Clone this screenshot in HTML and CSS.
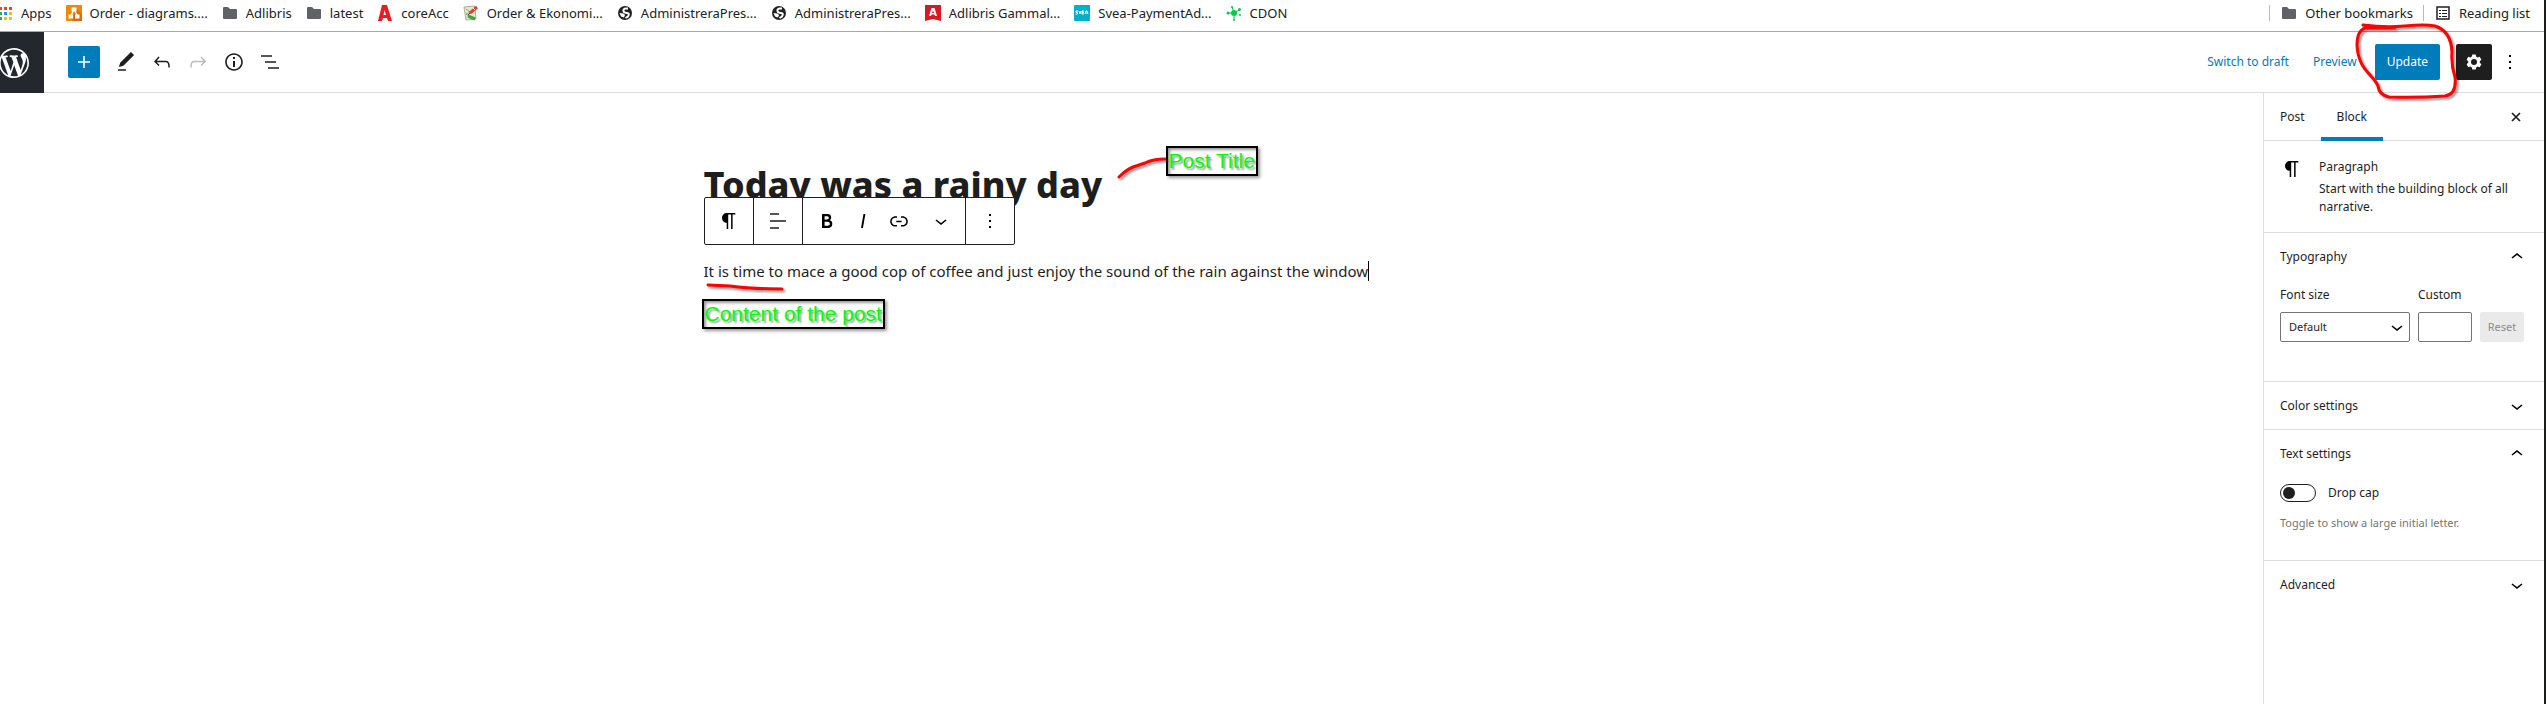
FILE: index.html
```html
<!DOCTYPE html>
<html lang="en">
<head>
<meta charset="utf-8">
<title>Edit Post</title>
<link rel="stylesheet" href="styles.css">
</head>
<body>
<div class="screen">
<nav class="bookmarks" aria-label="Bookmarks">
  <a class="bm bm-apps" href="#"><svg width="16" height="16" viewBox="0 0 16 16"><g fill="#ea4335"><path d="M2 2h3v3H2zM7 2h3v3H7zM12 2h3v3h-3z"/></g><path fill="#34a853" d="M2 7h3v3H2zM2 12h3v3H2z"/><path fill="#2196f3" d="M7 7h3v3H7z"/><path fill="#fbbc05" d="M12 7h3v3h-3zM7 12h3v3H7zM12 12h3v3h-3z"/></svg>Apps</a>
  <a class="bm" href="#"><svg width="16" height="16" viewBox="0 0 16 16"><rect width="16" height="16" rx="1" fill="#f08705"/><path d="M10 3l6 6v7H6z" fill="#df6c0c"/><path d="M8 4L5 11M8 4l3.500 7" stroke="#fff" stroke-width="1.300"/><path fill="#fff" d="M5.500 2.500h5v4h-5zM2.500 9.500h4.500v4H2.500zM9 9.500h4.500v4H9z"/></svg>Order - diagrams....</a>
  <a class="bm" href="#"><svg width="16" height="16" viewBox="0 0 16 16"><path fill="#5f6368" d="M1 3q0-1 1-1h4l2 2h6q1 0 1 1v8q0 1-1 1H2q-1 0-1-1z"/></svg>Adlibris</a>
  <a class="bm" href="#"><svg width="16" height="16" viewBox="0 0 16 16"><path fill="#5f6368" d="M1 3q0-1 1-1h4l2 2h6q1 0 1 1v8q0 1-1 1H2q-1 0-1-1z"/></svg>latest</a>
  <a class="bm" href="#"><svg width="16" height="16" viewBox="0 0 16 16"><path fill="#ed1c24" fill-rule="evenodd" d="M5 0h5l5 16h-4l-1-3H6l-1 3H1zM7.500 5L6.500 10h2.500z"/></svg>coreAcc</a>
  <a class="bm" href="#"><svg width="16" height="16" viewBox="0 0 16 16"><path fill="#e8e6d0" stroke="#a9b096" d="M1 2l11-1 1 13-10 1z"/><path d="M3 4l4 3-4 2 4 3" fill="none" stroke="#7fae74"/><path d="M7 8l7-6" stroke="#d8452a" stroke-width="3"/><path d="M5 10l2-2" stroke="#333"/><path d="M5 11l7 3" stroke="#3aa53e" stroke-width="3"/><path d="M10 3l2 2" stroke="#fff"/></svg>Order &amp; Ekonomi...</a>
  <a class="bm" href="#"><svg width="16" height="16" viewBox="0 0 16 16"><circle cx="8" cy="8" r="7" fill="#202124"/><path fill="none" stroke="#fff" stroke-width="2" d="M11 3.500H8.500Q6 4 6.500 6T10 8t1 3.500L8.500 13"/><path fill="#fff" d="M2.500 8l4 .5L8 10l-1 2.500-3-1z"/></svg>AdministreraPres...</a>
  <a class="bm" href="#"><svg width="16" height="16" viewBox="0 0 16 16"><circle cx="8" cy="8" r="7" fill="#202124"/><path fill="none" stroke="#fff" stroke-width="2" d="M11 3.500H8.500Q6 4 6.500 6T10 8t1 3.500L8.500 13"/><path fill="#fff" d="M2.500 8l4 .5L8 10l-1 2.500-3-1z"/></svg>AdministreraPres...</a>
  <a class="bm" href="#"><svg width="16" height="16" viewBox="0 0 16 16"><path fill="#d71920" d="M0 0h16v16l-8-2-8 2z"/><path fill="#fff" fill-rule="evenodd" d="M6.500 3h3L12 11h-2l-.5-1.500h-3L6 11H4zM8 5.500L7 8h2z"/></svg>Adlibris Gammal...</a>
  <a class="bm" href="#"><svg width="16" height="16" viewBox="0 0 16 16"><rect width="16" height="16" rx="1" fill="#00aece"/><path fill="none" stroke="#fff" d="M4 6H2v1.500h1.500V9H1.500M5 6l1 3 1-3M10 6H8v3h2M8 7.500h2M11 9l1-3h1l1 3M11.500 8h2"/></svg>Svea-PaymentAd...</a>
  <a class="bm" href="#"><svg width="16" height="16" viewBox="0 0 16 16"><path d="M8 8L6 2M8 8l5-3M8 8v7M8 8H2" stroke="#08c84e"/><g fill="#08c84e"><circle cx="8" cy="8" r="3"/><circle cx="6" cy="2" r="1"/><circle cx="13.500" cy="4.500" r="1.500"/><circle cx="2" cy="8" r="1.500"/><circle cx="8" cy="15" r="1"/><circle cx="14" cy="10" r="1"/></g></svg>CDON</a>
  <span class="bm-spacer"></span>
  <a class="bm bm-right" href="#"><svg width="16" height="16" viewBox="0 0 16 16"><path fill="#5f6368" d="M1 3q0-1 1-1h4l2 2h6q1 0 1 1v8q0 1-1 1H2q-1 0-1-1z"/></svg>Other bookmarks</a>
  <a class="bm bm-right" href="#"><svg width="16" height="16" viewBox="0 0 16 16"><path fill="none" stroke="#202124" stroke-width="1.500" d="M2 2h12v12H2z"/><path stroke="#202124" d="M4 5.500h2M4 8.500h2M4 11.500h2M7 5.500h5M7 8.500h5M7 11.500h5"/></svg>Reading list</a>
</nav>

<header class="topbar">
  <a class="wp-home" href="#" aria-label="View posts"><svg width="36" height="36" viewBox="-2 -2 24 24" fill="#fff"><path d="M20 10c0-5.510-4.490-10-10-10C4.480 0 0 4.490 0 10c0 5.520 4.480 10 10 10 5.510 0 10-4.480 10-10zM7.780 15.370L4.370 6.220c.55-.02 1.170-.08 1.170-.08.5-.06.440-1.130-.06-1.110 0 0-1.450.11-2.370.11-.18 0-.37 0-.58-.01C4.120 2.690 6.870 1.110 10 1.110c2.330 0 4.450.87 6.050 2.340-.68-.11-1.650.39-1.650 1.580 0 .74.450 1.360.9 2.100.35.610.550 1.360.550 2.460 0 1.490-1.400 5-1.400 5l-3.030-8.370c.54-.02.820-.17.820-.17.5-.05.440-1.250-.06-1.220 0 0-1.440.12-2.380.12-.87 0-2.330-.12-2.330-.12-.5-.03-.56 1.200-.06 1.220l.92.080 1.260 3.410zM17.410 10c.24-.64.740-1.870.430-4.250.7 1.290 1.050 2.710 1.050 4.250 0 3.290-1.730 6.240-4.400 7.780.97-2.590 1.940-5.200 2.920-7.780zM6.100 18.090C3.120 16.650 1.110 13.530 1.110 10c0-1.300.230-2.480.720-3.590C3.250 10.300 4.670 14.200 6.100 18.090zm4.030-6.630l2.580 6.980c-.86.290-1.760.45-2.710.45-.79 0-1.570-.11-2.290-.33.810-2.380 1.620-4.740 2.420-7.100z"/></svg></a>
  <div class="tools">
    <button class="tool tool-add" aria-label="Add block"><svg width="24" height="24" viewBox="0 0 24 24"><path fill="#fff" d="M18 11.200h-5.200V6h-1.600v5.200H6v1.600h5.200V18h1.600v-5.200H18z"/></svg></button>
    <button class="tool" aria-label="Modes"><svg width="24" height="24" viewBox="0 0 24 24"><path d="M20.100 5.100L16.900 2 6.200 12.700l-1.300 4.400 4.500-1.300L20.100 5.100z"/><path fill="#555" d="M4 19h8v2H4z"/></svg></button>
    <button class="tool" aria-label="Undo"><svg width="24" height="24" viewBox="0 0 24 24"><path d="M18.300 11.700c-.6-.6-1.400-.9-2.300-.9H6.700l2.900-3.300-1.100-1-4.500 5L8.500 16l1-1-2.700-2.700H16c.5 0 .9.200 1.300.5 1 1 1 3.400 1 4.500v.3h1.500v-.2c0-1.500 0-4.300-1.500-5.700z"/></svg></button>
    <button class="tool tool-off" aria-label="Redo" disabled><svg width="24" height="24" viewBox="0 0 24 24"><path d="M15.600 6.500l-1.100 1 2.900 3.300H8c-.9 0-1.700.3-2.300.9-1.400 1.500-1.400 4.200-1.400 5.600v.2h1.500v-.3c0-1.100 0-3.500 1-4.500.3-.3.700-.5 1.300-.5h9.200L14.500 15l1.100 1.100 4.600-4.600-4.600-5z"/></svg></button>
    <button class="tool" aria-label="Details"><svg width="24" height="24" viewBox="0 0 24 24"><path d="M12 3.200c-4.800 0-8.800 3.900-8.800 8.800 0 4.800 3.900 8.800 8.800 8.800 4.800 0 8.800-3.900 8.800-8.800 0-4.800-4-8.800-8.800-8.800zm0 16c-4 0-7.200-3.300-7.200-7.200C4.800 8 8 4.800 12 4.800s7.200 3.300 7.200 7.200c0 4-3.200 7.200-7.200 7.200zM11 17h2v-6h-2v6zm0-8h2V7h-2v2z"/></svg></button>
    <button class="tool tool-soft" aria-label="Outline"><svg width="24" height="24" viewBox="0 0 24 24"><path d="M3 5h11v2H3zM7 11h11v2H7zM10 17h11v2H10z"/></svg></button>
  </div>
  <div class="actions">
    <button class="link-btn">Switch to draft</button>
    <button class="link-btn">Preview</button>
    <div class="update-wrap">
      <button class="update">Update</button>
      <svg class="scribble" width="106" height="82" viewBox="0 0 106 82"><path d="M8 4Q30 7 50 5T80 5Q96 10 97 31Q96 44 100 56Q102 73 90 75Q62 77 34 76Q24 74 23 65C18 53 3 49 2 24Q2 10 10 7L40 7" /></svg>
    </div>
    <button class="gear" aria-label="Settings"><svg width="24" height="24" viewBox="0 0 24 24"><path fill="#fff" fill-rule="evenodd" d="M10.300 4.500h3.400l.5 2.100 1.400.8 2.100-.6 1.700 2.900-1.600 1.500v1.600l1.600 1.500-1.700 2.900-2.100-.6-1.400.8-.5 2.100h-3.400l-.5-2.100-1.400-.8-2.100.6-1.700-2.900 1.600-1.500v-1.600L4.600 9.700l1.700-2.900 2.100.6 1.400-.8zM12 9a3 3 0 1 0 0 6 3 3 0 0 0 0-6z"/></svg></button>
    <button class="more" aria-label="Options"><svg width="24" height="24" viewBox="0 0 24 24"><path d="M11 5h2v2h-2zM11 11h2v2h-2zM11 17h2v2h-2z"/></svg></button>
  </div>
</header>

<div class="workspace">
  <main class="canvas">
    <article class="post">
      <h1 class="title">Today was a rainy day</h1>
      <div class="block-tools" role="toolbar" aria-label="Block tools">
        <div class="group"><button class="bt" aria-label="Paragraph"><svg width="24" height="24" viewBox="0 0 24 24"><path d="M18.300 4H9.900v-.1l-.9.200c-2.300.4-4 2.400-4 4.800s1.700 4.400 4 4.800l.7.100V20h1.500V5.500h2.900V20h1.500V5.500h2.700V4z"/></svg></button></div>
        <div class="group"><button class="bt tool-soft" aria-label="Align"><svg width="24" height="24" viewBox="0 0 24 24"><path d="M4 4h9v2H4zM4 11h16v2H4zM4 18h9v2H4z"/></svg></button></div>
        <div class="group group-wide"><button class="bt" aria-label="Bold"><svg width="24" height="24" viewBox="0 0 24 24"><path d="M14.700 11.300c1-.6 1.500-1.600 1.500-3 0-2.300-1.300-3.400-4-3.400H7v14h5.800c1.400 0 2.500-.3 3.300-1 .8-.7 1.200-1.700 1.200-2.900.1-1.900-.8-3.100-2.600-3.700zm-5.100-4h2.300c.6 0 1.100.1 1.400.4.3.300.5.700.5 1.200s-.2 1-.5 1.200c-.3.300-.8.400-1.400.4H9.600V7.300zm4.600 9c-.4.300-1 .4-1.700.4H9.600v-3.900h2.900c.7 0 1.300.2 1.700.5.4.3.600.8.600 1.500s-.2 1.200-.6 1.500z"/></svg></button>
        <button class="bt" aria-label="Italic"><svg width="24" height="24" viewBox="0 0 24 24"><path d="M12.500 5L10 19h1.900l2.500-14z"/></svg></button>
        <button class="bt" aria-label="Link"><svg width="24" height="24" viewBox="0 0 24 24"><path d="M15.600 7.200H14v1.500h1.600c2 0 3.700 1.700 3.700 3.700s-1.700 3.700-3.700 3.700H14v1.500h1.600c2.800 0 5.200-2.300 5.200-5.200 0-2.900-2.300-5.200-5.200-5.200zM4.700 12.400c0-2 1.700-3.700 3.700-3.700H10V7.200H8.400c-2.900 0-5.200 2.300-5.200 5.200 0 2.900 2.300 5.200 5.200 5.200H10v-1.500H8.400c-2 0-3.700-1.700-3.700-3.700zm4.600.9h5.300v-1.500H9.300v1.500z"/></svg></button>
        <button class="bt bt-more" aria-label="More"><svg width="24" height="24" viewBox="0 0 24 24"><path d="M17.500 11.600L12 16l-5.500-4.400.9-1.200L12 14l4.500-3.600 1 1.200z"/></svg></button></div>
        <div class="group"><button class="bt" aria-label="Options"><svg width="24" height="24" viewBox="0 0 24 24"><path d="M11 5h2v2h-2zM11 11h2v2h-2zM11 17h2v2h-2z"/></svg></button></div>
      </div>
      <p class="para">It is time to mace a good cop of coffee and just enjoy the sound of the rain against the window<span class="caret"></span></p>
      <svg class="mark mark-para" width="90" height="18" viewBox="0 0 90 18"><path d="M4 5L26 6Q48 9 78 9"/></svg>
      <svg class="mark mark-title" width="56" height="34" viewBox="0 0 56 34"><path d="M4 26Q11 19 18 16L30 12Q38 8 50 8"/></svg>
      <span class="note note-title">Post Title</span>
      <span class="note note-para">Content of the post</span>
    </article>
  </main>

  <aside class="sidebar">
    <div class="tabs">
      <button class="tab">Post</button>
      <button class="tab tab-on">Block</button>
      <button class="close" aria-label="Close settings"><svg width="24" height="24" viewBox="0 0 24 24"><path d="M8 8l8 8M16 8l-8 8" stroke="#1e1e1e" stroke-width="1.700"/></svg></button>
    </div>
    <section class="card">
      <svg width="24" height="24" viewBox="0 0 24 24"><path d="M18.300 4H9.900v-.1l-.9.200c-2.300.4-4 2.400-4 4.800s1.700 4.400 4 4.800l.7.100V20h1.500V5.500h2.900V20h1.500V5.500h2.700V4z"/></svg>
      <div><h2 class="card-title">Paragraph</h2><p class="card-text">Start with the building block of all narrative.</p></div>
    </section>
    <section class="panel">
      <button class="panel-head">Typography<svg width="24" height="24" viewBox="0 0 24 24"><path d="M6.500 12.400L12 8l5.500 4.400-.9 1.200L12 10l-4.500 3.600-1-1.200z"/></svg></button>
      <div class="panel-body fonts">
        <div class="field field-size"><label for="size">Font size</label><div class="select-wrap"><select id="size" class="control"><option>Default</option></select><svg width="18" height="18" viewBox="3 3 18 18"><path d="M17.500 11.600L12 16l-5.500-4.400.9-1.200L12 14l4.500-3.600 1 1.200z"/></svg></div></div>
        <div class="field field-custom"><label for="custom">Custom</label><input id="custom" class="control" type="text"></div>
        <button class="reset" disabled>Reset</button>
      </div>
    </section>
    <section class="panel"><button class="panel-head">Color settings<svg width="24" height="24" viewBox="0 0 24 24"><path d="M17.500 11.600L12 16l-5.500-4.400.9-1.200L12 14l4.500-3.600 1 1.200z"/></svg></button></section>
    <section class="panel">
      <button class="panel-head">Text settings<svg width="24" height="24" viewBox="0 0 24 24"><path d="M6.500 12.400L12 8l5.500 4.400-.9 1.200L12 10l-4.500 3.600-1-1.200z"/></svg></button>
      <div class="panel-body">
        <div class="toggle-row"><input id="dropcap" class="toggle" type="checkbox"><label for="dropcap">Drop cap</label></div>
        <p class="help">Toggle to show a large initial letter.</p>
      </div>
    </section>
    <section class="panel"><button class="panel-head">Advanced<svg width="24" height="24" viewBox="0 0 24 24"><path d="M17.500 11.600L12 16l-5.500-4.400.9-1.200L12 14l4.500-3.600 1 1.200z"/></svg></button></section>
  </aside>
</div>
</div>
</body>
</html>
```
FILE: styles.css
```css
* { box-sizing: border-box; }
body { margin: 0; background: #fff; color: #1e1e1e; font: 12px/18px "Noto Sans", sans-serif; }
button, input, select { font: inherit; color: inherit; }
button { display: inline-flex; align-items: center; justify-content: center; padding: 0; border: 0; background: none; }
svg { display: block; flex: none; }
h1, h2, p { margin: 0; }

.screen { display: flex; flex-direction: column; min-height: 100vh; border-right: 2px solid #1b1d18; }

.bookmarks { display: flex; align-items: center; height: 32px; padding: 0 14px 5px 0; border-bottom: 1px solid #a9a9a9; font-size: 13px; line-height: 16px; overflow: hidden; }
.bm { display: flex; align-items: center; gap: 8px; margin-right: 14px; color: #202124; text-decoration: none; white-space: nowrap; }
.bm-apps { margin-left: -3px; }
.bm-spacer { flex: 1; }
.bm-right { margin: 0; padding-left: 11px; border-left: 1px solid #bbb; }
.bm-right + .bm-right { margin-left: 10px; }

.topbar { display: flex; align-items: center; height: 61px; border-bottom: 1px solid #ddd; }
.wp-home { display: flex; align-items: center; align-self: stretch; width: 44px; margin-bottom: -1px; background: #23282e; }
.wp-home svg { margin-left: -4px; }
.tools { display: flex; gap: 4px; margin-left: 24px; }
.tool { width: 32px; height: 32px; border-radius: 2px; fill: #1e1e1e; }
.tool-add { margin-right: 6px; background: #007cba; }
.tool-off { fill: #bbb; }
.tool-soft { fill: #555; }
.actions { display: flex; align-items: center; margin-left: auto; padding-right: 16px; }
.link-btn { height: 36px; padding: 0 12px; color: #007cba; }
.update-wrap { position: relative; margin: 0 16px 0 6px; }
.update { height: 36px; padding: 0 12px; border-radius: 2px; background: #007cba; color: #fff; }
.scribble { position: absolute; left: -20px; top: -23px; }
.scribble, .mark { fill: none; stroke: #f00; stroke-width: 3; stroke-linecap: round; stroke-linejoin: round; filter: drop-shadow(2px 2px 1px #0006); pointer-events: none; overflow: visible; }
.gear { width: 36px; height: 36px; border-radius: 2px; background: #1e1e1e; }
.more { width: 36px; height: 36px; }

.workspace { display: flex; flex: 1; }
.canvas { flex: 1; padding-top: 62px; }
.post { position: relative; width: 856px; max-width: 100%; margin: 0 auto; }
.title { font-size: 36px; line-height: 60px; font-weight: 800; }
.block-tools { position: absolute; left: 0; top: 42px; display: flex; height: 48px; border: 1px solid #1e1e1e; border-radius: 2px; background: #fff; }
.group { display: flex; border-right: 1px solid #1e1e1e; }
.group:last-child { border-right: 0; }
.bt { width: 48px; }
.group-wide { padding-left: 6px; }
.group-wide .bt { width: 36px; }
.group-wide .bt-more { width: 48px; }
.para { margin-top: 42px; font-size: 15px; line-height: 28px; }
.caret { display: inline-block; width: 1px; height: 20px; background: #000; vertical-align: -4px; }
.note { position: absolute; padding: 2px 1px; border: 2px solid #000; color: #0f0; font: 21px/22px "Liberation Sans", sans-serif; text-shadow: 2px 2px 2px #0006; box-shadow: 2px 2px 3px #0006, inset 2px 2px 3px #0006; white-space: nowrap; }
.note-title { left: 462px; top: -9px; }
.note-para { left: -2px; top: 144px; }
.mark-para { position: absolute; left: 0; top: 125px; }
.mark-title { position: absolute; left: 411px; top: -4px; }

.sidebar { width: 281px; border-left: 1px solid #ddd; }
.tabs { display: flex; height: 48px; border-bottom: 1px solid #ddd; }
.tab { padding: 0 16px; }
.tab-on { margin-bottom: -1px; padding: 4px 16px 0; border-bottom: 4px solid #007cba; }
.close { width: 24px; margin: 0 16px 0 auto; }
.card { display: flex; gap: 15px; padding: 16px; }
.card-title { font-size: 12px; line-height: 20px; font-weight: 400; }
.card-text { margin-top: 3px; }
.panel { border-top: 1px solid #ddd; }
.panel-head { display: flex; width: 100%; height: 47px; padding: 0 15px 0 16px; justify-content: space-between; }
.panel-body { padding: 0 16px 28px; }
.fonts { display: flex; align-items: flex-end; gap: 8px; padding-top: 6px; padding-bottom: 39px; }
.field { display: flex; flex-direction: column; gap: 8px; }
.field-size { width: 130px; }
.field-custom { width: 54px; }
.control { width: 100%; height: 30px; padding: 0 8px; border: 1px solid #757575; border-radius: 2px; background: #fff; font-size: 11px; appearance: none; }
.select-wrap { position: relative; }
.select-wrap svg { position: absolute; right: 4px; top: 6px; pointer-events: none; }
.reset { width: 44px; height: 30px; border-radius: 2px; background: #eaeaea; color: #8c8c8c; font-size: 11px; }
.toggle-row { display: flex; align-items: center; gap: 12px; height: 32px; }
.toggle { appearance: none; display: flex; align-items: center; width: 36px; height: 18px; margin: 0; padding: 0 2px; border: 1px solid #1e1e1e; border-radius: 9px; }
.toggle::before { content: ""; width: 12px; height: 12px; border-radius: 50%; background: #1e1e1e; }
.help { margin-top: 5px; color: #757575; font-size: 11px; }
```
